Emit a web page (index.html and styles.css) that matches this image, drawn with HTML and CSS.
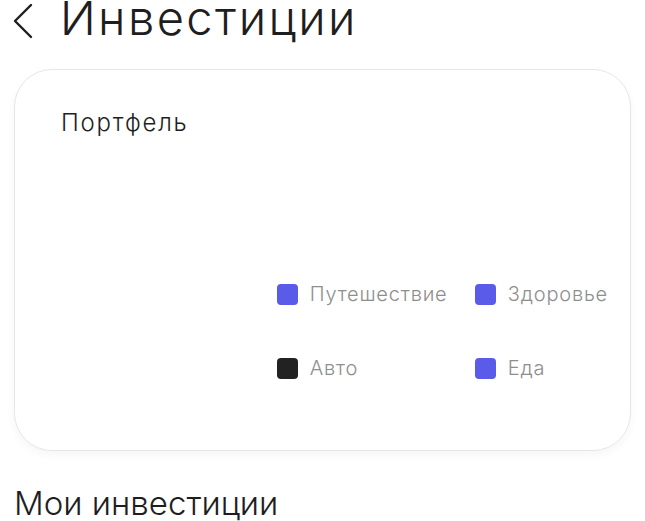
FILE: index.html
```html
<!DOCTYPE html>
<html lang="ru">
<head>
    <meta charset="UTF-8">
    <meta name="viewport" content="width=device-width, initial-scale=1.0">
    <title>Инвестиции</title>
    <link rel="stylesheet" href="styles.css">
</head>
<body>
    <header class="header">
        <button class="back" type="button" aria-label="Назад">
            <svg width="22" height="36" viewBox="0 0 22 36">
                <path d="M19 2 L3 18 L19 34" fill="none" stroke="#1e1e1e" stroke-width="2.4" stroke-linecap="round" stroke-linejoin="round"/>
            </svg>
        </button>
        <h1>Инвестиции</h1>
    </header>

    <section class="card">
        <h2>Портфель</h2>
        <div class="portfolio">
            <div class="chart"></div>
            <ul class="legend">
                <li><span class="dot blue"></span>Путешествие</li>
                <li><span class="dot blue"></span>Здоровье</li>
                <li><span class="dot dark"></span>Авто</li>
                <li><span class="dot blue"></span>Еда</li>
            </ul>
        </div>
    </section>

    <h3 class="section-title">Мои инвестиции</h3>
</body>
</html>
```

FILE: styles.css
```css
body {
    font-family: Inter, "Noto Sans", sans-serif;
    background-color: #FFFFFF;
    color: #1E1E1E;
    margin: 0;
}
.header {
    display: flex;
    align-items: center;
    gap: 26px;
    padding: 0 0 0 12px;
    height: 48px;
    margin-top: -6px;
}
.back {
    display: flex;
    padding: 0;
    border: none;
    background: none;
    margin-top: 6px;
}
h1 {
    margin: 0;
    font-size: 47px;
    font-weight: 300;
    line-height: 48px;
    letter-spacing: 2.4px;
}
.card {
    margin: 27px 14px 0;
    height: 382px;
    border: 1.5px solid #E6E6E6;
    border-radius: 38px;
    box-shadow: 0 4px 10px rgba(0, 0, 0, 0.04);
    padding: 38px 22px 0 46px;
    box-sizing: border-box;
}
h2 {
    margin: 0;
    font-size: 24px;
    font-weight: 300;
    line-height: 30px;
    letter-spacing: 1.8px;
}
.portfolio {
    display: flex;
    margin-top: 145px;
}
.chart {
    width: 216px;
}
.legend {
    list-style: none;
    margin: 0;
    padding: 0;
    display: grid;
    grid-template-columns: 198px auto;
    row-gap: 52px;
}
.legend li {
    display: flex;
    align-items: center;
    gap: 12px;
    height: 22px;
    font-size: 20px;
    font-weight: 300;
    letter-spacing: 0.8px;
    color: #8E8E8E;
}
.dot {
    width: 21px;
    height: 21px;
    border-radius: 4px;
}
.blue {
    background-color: #5B5BE9;
}
.dark {
    background-color: #222222;
}
.section-title {
    margin: 32px 0 0 14px;
    font-size: 33px;
    font-weight: 300;
    line-height: 40px;
}
```
